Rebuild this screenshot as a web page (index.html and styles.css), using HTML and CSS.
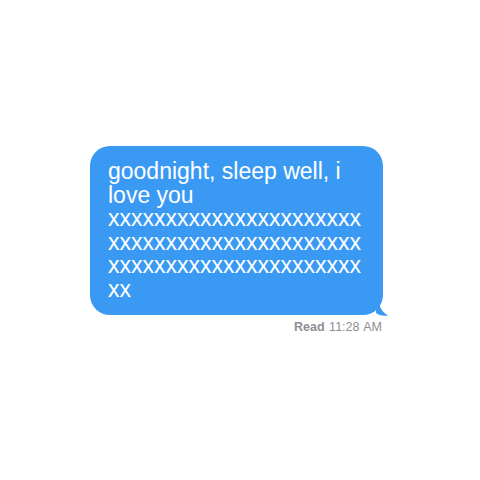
FILE: index.html
```html
<!DOCTYPE html>
<html lang="en">
<head>
    <meta charset="UTF-8">
    <meta name="viewport" content="width=device-width, initial-scale=1.0">
    <title>Message</title>
    <link rel="stylesheet" href="styles.css">
</head>
<body>
    <div class="thread">
        <div class="bubble">
            goodnight, sleep well, i love you xxxxxxxxxxxxxxxxxxxxxxxxxxxxxxxxxxxxxxxxxxxxxxxxxxxxxxxxxxxxxxxxxxxx
            <svg class="tail" width="14" height="16" viewBox="0 0 14 16">
                <path d="M0 0 L3 0 C3 7 6 12 12 15.5 C7 16.5 2 15 0 13 Z" fill="#3a9af3"/>
            </svg>
        </div>
        <div class="status"><b>Read</b> 11:28 AM</div>
    </div>
</body>
</html>
```
FILE: styles.css
```css
body { margin: 0; background: #fff; font-family: "Liberation Sans", Arial, sans-serif; }
.thread { width: 293px; padding: 146px 0 0 90px; display: flex; flex-direction: column; }
.bubble {
    position: relative; background: #3a9af3; color: #fff; border-radius: 20px;
    padding: 14px 12px 13px 18px; font-size: 23px; line-height: 23.6px;
    overflow-wrap: anywhere;
}
.tail { position: absolute; right: -7px; bottom: -1px; }
.status { align-self: flex-end; margin: 5px 1px 0 0; font-size: 12.5px; color: #8e8e93; word-spacing: 1px; }
.status b { font-weight: bold; }
```
